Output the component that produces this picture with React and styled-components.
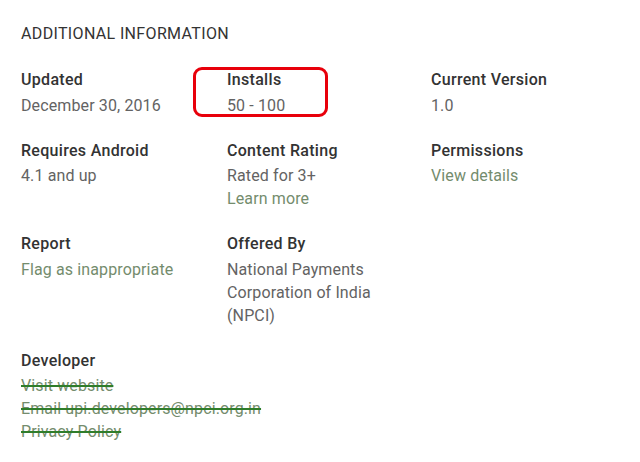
import React from "react";
import styled, { createGlobalStyle } from "styled-components";

const Global = createGlobalStyle`
  html, body { margin: 0; padding: 0; background: #fff; }
  body { font-family: Roboto, "Noto Sans", Arial, sans-serif; }
`;

const Page = styled.div`
  width: 640px;
  height: 462px;
  box-sizing: border-box;
  padding: 22px 0 0 21px;
  background: #fff;
  overflow: hidden;
`;

const Title = styled.h2`
  margin: 0 0 22px;
  font-size: 16px;
  line-height: 24px;
  font-weight: 400;
  color: #333;
  letter-spacing: 0.35px;
  text-transform: uppercase;
`;

const Grid = styled.div`
  display: grid;
  grid-template-columns: 206px 204px 1fr;
  row-gap: 22px;
`;

const Cell = styled.div`
  position: relative;
  grid-column: ${(p) => p.$span || "auto"};
`;

const Label = styled.div`
  font-size: 16px;
  line-height: 24px;
  margin-bottom: 1.5px;
  font-weight: 500;
  letter-spacing: 0.3px;
  color: #333;
`;

const Value = styled.div`
  font-size: 16px;
  line-height: 23px;
  font-weight: 400;
  letter-spacing: 0.12px;
  color: #636363;
`;

const Link = styled.div`
  font-size: 16px;
  line-height: 23px;
  font-weight: 400;
  letter-spacing: 0.12px;
  color: #748c6d;
  text-decoration: ${(p) => (p.$struck ? "line-through" : "none")};
  text-decoration-color: #2f7d2a;
  text-decoration-thickness: 1.5px;
`;

const Highlight = styled.div`
  position: absolute;
  left: -34px;
  top: -1px;
  width: 135px;
  height: 50px;
  box-sizing: border-box;
  border: 3px solid #e8000b;
  border-radius: 9px;
  pointer-events: none;
`;

export default function App() {
  return (
    <Page>
      <Global />
      <Title>Additional Information</Title>
      <Grid>
        <Cell>
          <Label>Updated</Label>
          <Value>December 30, 2016</Value>
        </Cell>
        <Cell>
          <Highlight />
          <Label>Installs</Label>
          <Value>50 - 100</Value>
        </Cell>
        <Cell>
          <Label>Current Version</Label>
          <Value>1.0</Value>
        </Cell>

        <Cell>
          <Label>Requires Android</Label>
          <Value>4.1 and up</Value>
        </Cell>
        <Cell>
          <Label>Content Rating</Label>
          <Value>Rated for 3+</Value>
          <Link>Learn more</Link>
        </Cell>
        <Cell>
          <Label>Permissions</Label>
          <Link>View details</Link>
        </Cell>

        <Cell>
          <Label>Report</Label>
          <Link>Flag as inappropriate</Link>
        </Cell>
        <Cell $span="span 2">
          <Label>Offered By</Label>
          <Value>National Payments</Value>
          <Value>Corporation of India</Value>
          <Value>(NPCI)</Value>
        </Cell>

        <Cell $span="1 / -1">
          <Label>Developer</Label>
          <Link $struck>Visit website</Link>
          <Link $struck>Email upi.developers@npci.org.in</Link>
          <Link $struck>Privacy Policy</Link>
        </Cell>
      </Grid>
    </Page>
  );
}
